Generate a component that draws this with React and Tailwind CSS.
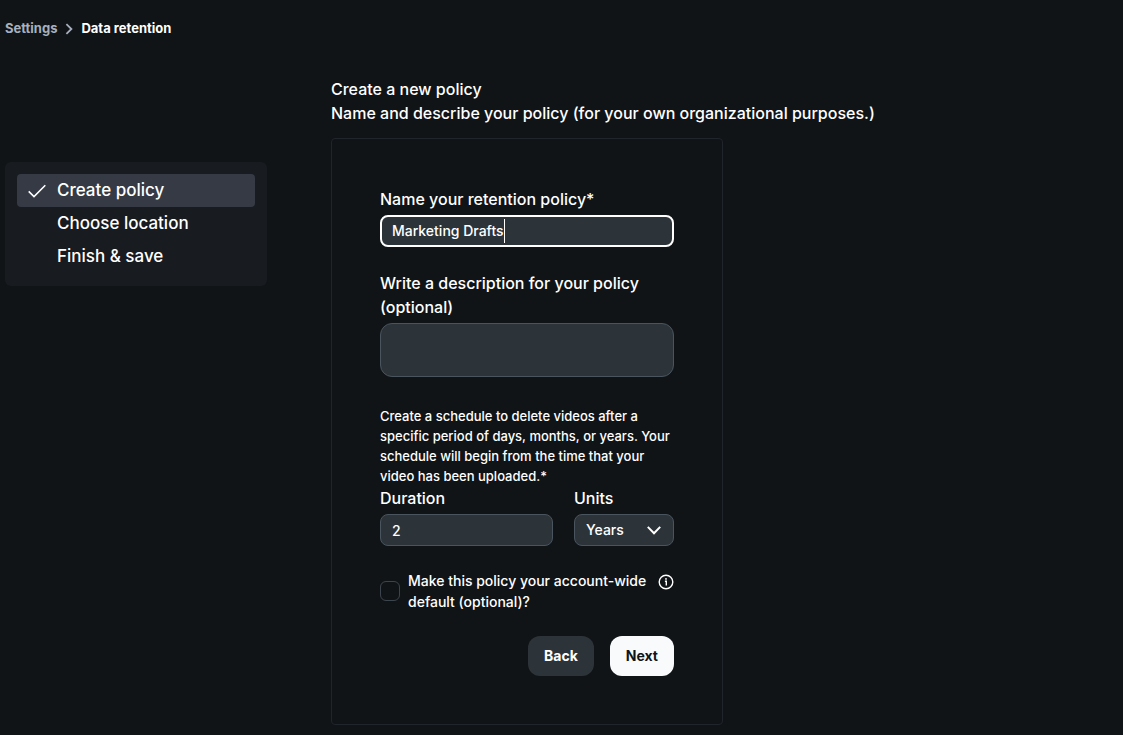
// App.jsx
import React, { useState } from "react";

const CheckIcon = () => (
    <svg width="18" height="14" viewBox="0 0 18 14" fill="none" stroke="currentColor" strokeWidth="1.6" aria-hidden="true">
        <path d="M0.7 7.4L6 12.6L17.3 1.3" />
    </svg>
);

const CrumbIcon = () => (
    <svg width="8" height="12" viewBox="0 0 8 12" fill="none" stroke="currentColor" strokeWidth="1.8" aria-hidden="true">
        <path d="M1.4 1.2L6.4 6L1.4 10.8" />
    </svg>
);

const ChevronIcon = () => (
    <svg className="pointer-events-none absolute right-[13px] top-3" width="14" height="9" viewBox="0 0 14 9" fill="none" stroke="currentColor" strokeWidth="2" aria-hidden="true">
        <path d="M0.8 0.9L7 7.2L13.2 0.9" />
    </svg>
);

const InfoIcon = () => (
    <svg width="16" height="16" viewBox="0 0 16 16" fill="none" aria-hidden="true">
        <circle cx="8" cy="8" r="6.8" stroke="currentColor" strokeWidth="1.4" />
        <path d="M6.9 7.2H8.3V11.4" stroke="currentColor" strokeWidth="1.4" />
        <circle cx="8" cy="4.9" r="0.9" fill="currentColor" />
    </svg>
);

const steps = ["Create policy", "Choose location", "Finish & save"];

const App = () => {
    const [name, setName] = useState("Marketing Drafts");
    const [description, setDescription] = useState("");
    const [duration, setDuration] = useState("2");
    const [units, setUnits] = useState("Years");
    const [isDefault, setIsDefault] = useState(false);
    const current = 0;

    return (
        <div className="min-h-screen bg-[#101417] px-[5px] pt-[19px] pb-[10px] font-['Inter',sans-serif] font-medium text-white">
            <nav aria-label="Breadcrumb" className="flex h-5 items-center gap-2 text-[13px] font-bold">
                <a href="#settings" className="text-[#a7b0be]">Settings</a>
                <span className="text-[#a7b0be]"><CrumbIcon /></span>
                <span aria-current="page">Data retention</span>
            </nav>

            <div className="mt-[38px] flex items-start gap-16">
                <aside className="mt-[85px] w-[262px] shrink-0 rounded-md bg-[#181b1f] px-3 pt-3 pb-[13px]">
                    <ul>
                        {steps.map((step, index) => (
                            <li key={step}>
                                <button
                                    type="button"
                                    className={`flex h-[33px] w-full items-center rounded text-left text-[17px] ${index === current ? "bg-[#353a45]" : ""}`}
                                >
                                    <span className="flex w-10 justify-center">{index === current && <CheckIcon />}</span>
                                    {step}
                                </button>
                            </li>
                        ))}
                    </ul>
                </aside>

                <main className="min-w-0">
                    <h1>Create a new policy</h1>
                    <p>Name and describe your policy (for your own organizational purposes.)</p>

                    <form onSubmit={(e) => e.preventDefault()} className="mt-[13px] w-[392px] rounded border border-[#20242b] p-12">
                        <label htmlFor="name" className="block">Name your retention policy*</label>
                        <div className="mt-1 flex h-8 items-center rounded-lg border-2 border-white bg-[#2c343a] px-[10px] text-sm">
                            <input
                                id="name"
                                type="text"
                                value={name}
                                onChange={(e) => setName(e.target.value)}
                                className="field-sizing-content bg-transparent caret-transparent outline-none"
                            />
                            <span className="h-6 w-px bg-white" />
                        </div>

                        <label htmlFor="description" className="mt-6 block">Write a description for your policy (optional)</label>
                        <textarea
                            id="description"
                            value={description}
                            onChange={(e) => setDescription(e.target.value)}
                            className="mt-1 block h-[54px] w-full resize-none rounded-xl border border-[#49545e] bg-[#2c343a] px-3 py-2 text-sm outline-none"
                        />

                        <p className="mt-[29px] text-[13px] leading-5">
                            Create a schedule to delete videos after a specific period of days, months, or years. Your schedule will begin from the time that your video has been uploaded.*
                        </p>

                        <div className="flex gap-[21px]">
                            <div className="min-w-0 flex-1">
                                <label htmlFor="duration" className="block">Duration</label>
                                <input
                                    id="duration"
                                    type="text"
                                    value={duration}
                                    onChange={(e) => setDuration(e.target.value)}
                                    className="mt-1 block h-8 w-full rounded-lg border border-[#49545e] bg-[#2c343a] px-[11px] text-sm outline-none"
                                />
                            </div>
                            <div className="w-[100px]">
                                <label htmlFor="units" className="block">Units</label>
                                <div className="relative mt-1">
                                    <select
                                        id="units"
                                        value={units}
                                        onChange={(e) => setUnits(e.target.value)}
                                        className="block h-8 w-full appearance-none rounded-lg border border-[#49545e] bg-[#2c343a] px-[11px] text-sm outline-none"
                                    >
                                        <option>Days</option>
                                        <option>Months</option>
                                        <option>Years</option>
                                    </select>
                                    <ChevronIcon />
                                </div>
                            </div>
                        </div>

                        <div className="mt-6 flex items-start">
                            <input
                                id="default"
                                type="checkbox"
                                checked={isDefault}
                                onChange={(e) => setIsDefault(e.target.checked)}
                                className="mt-[11px] size-5 shrink-0 appearance-none rounded-md border border-[#3c444d] checked:bg-white"
                            />
                            <label htmlFor="default" className="ml-2 flex-1 text-sm leading-[21px]">
                                Make this policy your account-wide default (optional)?
                            </label>
                            <button type="button" aria-label="More information" className="mt-1">
                                <InfoIcon />
                            </button>
                        </div>

                        <div className="mt-6 flex justify-end gap-4 text-sm font-bold">
                            <button type="button" className="h-10 rounded-xl bg-[#2c343a] px-4">Back</button>
                            <button type="submit" className="h-10 rounded-xl bg-[#f9fafc] px-4 text-[#101417]">Next</button>
                        </div>
                    </form>
                </main>
            </div>
        </div>
    );
};

export default App;
